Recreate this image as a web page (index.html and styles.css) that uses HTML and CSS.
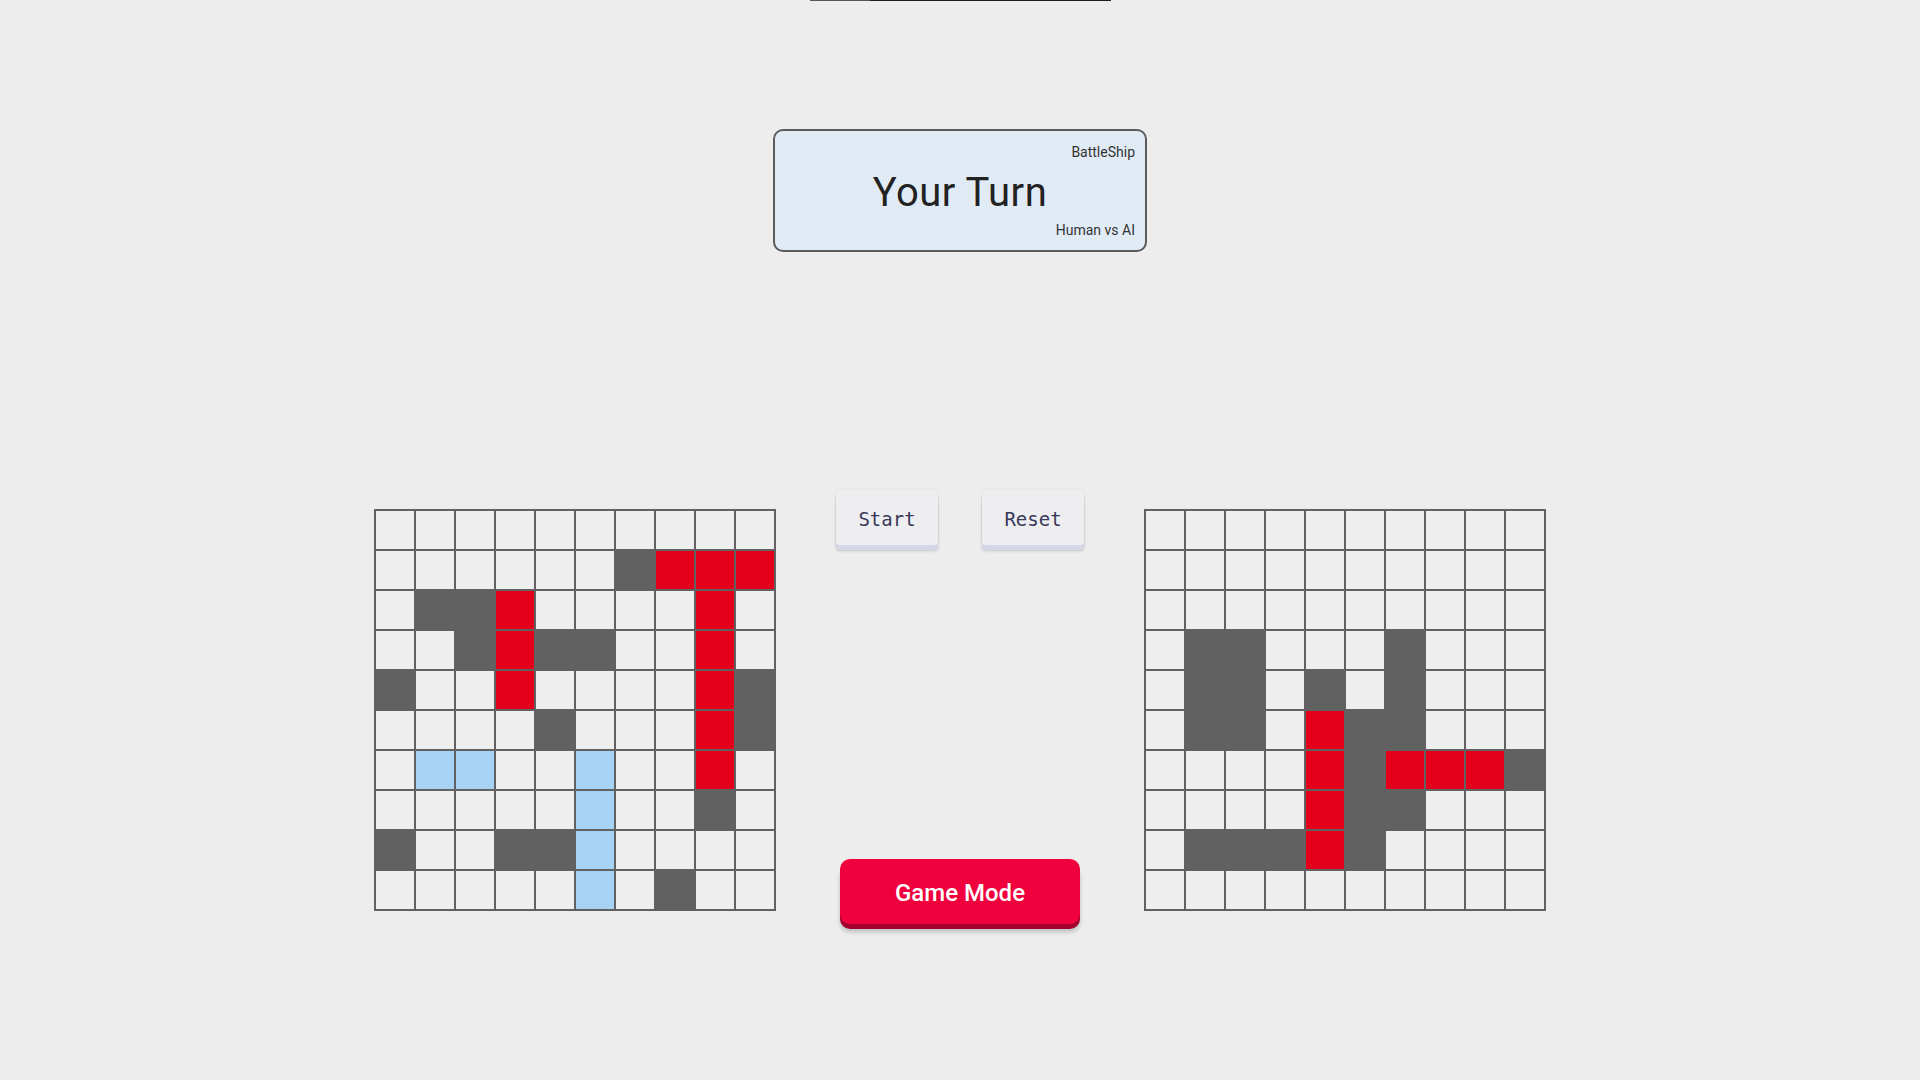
FILE: index.html
```html
<!DOCTYPE html>
<html>
<head>
<meta charset="utf-8">
<title>BattleShip</title>
<link rel="stylesheet" href="styles.css">
</head>
<body>
<div class="topline"></div>
<div class="status">
  <div class="status-small">BattleShip</div>
  <div class="status-title">Your Turn</div>
  <div class="status-small">Human vs AI</div>
</div>
<div class="board-row">
  <div class="grid">
    <div class="cell"></div><div class="cell"></div><div class="cell"></div><div class="cell"></div><div class="cell"></div><div class="cell"></div><div class="cell"></div><div class="cell"></div><div class="cell"></div><div class="cell"></div>
    <div class="cell"></div><div class="cell"></div><div class="cell"></div><div class="cell"></div><div class="cell"></div><div class="cell"></div><div class="cell ship"></div><div class="cell hit"></div><div class="cell hit"></div><div class="cell hit"></div>
    <div class="cell"></div><div class="cell ship"></div><div class="cell ship"></div><div class="cell hit"></div><div class="cell"></div><div class="cell"></div><div class="cell"></div><div class="cell"></div><div class="cell hit"></div><div class="cell"></div>
    <div class="cell"></div><div class="cell"></div><div class="cell ship"></div><div class="cell hit"></div><div class="cell ship"></div><div class="cell ship"></div><div class="cell"></div><div class="cell"></div><div class="cell hit"></div><div class="cell"></div>
    <div class="cell ship"></div><div class="cell"></div><div class="cell"></div><div class="cell hit"></div><div class="cell"></div><div class="cell"></div><div class="cell"></div><div class="cell"></div><div class="cell hit"></div><div class="cell ship"></div>
    <div class="cell"></div><div class="cell"></div><div class="cell"></div><div class="cell"></div><div class="cell ship"></div><div class="cell"></div><div class="cell"></div><div class="cell"></div><div class="cell hit"></div><div class="cell ship"></div>
    <div class="cell"></div><div class="cell miss"></div><div class="cell miss"></div><div class="cell"></div><div class="cell"></div><div class="cell miss"></div><div class="cell"></div><div class="cell"></div><div class="cell hit"></div><div class="cell"></div>
    <div class="cell"></div><div class="cell"></div><div class="cell"></div><div class="cell"></div><div class="cell"></div><div class="cell miss"></div><div class="cell"></div><div class="cell"></div><div class="cell ship"></div><div class="cell"></div>
    <div class="cell ship"></div><div class="cell"></div><div class="cell"></div><div class="cell ship"></div><div class="cell ship"></div><div class="cell miss"></div><div class="cell"></div><div class="cell"></div><div class="cell"></div><div class="cell"></div>
    <div class="cell"></div><div class="cell"></div><div class="cell"></div><div class="cell"></div><div class="cell"></div><div class="cell miss"></div><div class="cell"></div><div class="cell ship"></div><div class="cell"></div><div class="cell"></div>
  </div>
  <div class="center-col">
    <div class="controls">
      <button class="ctrl-btn">Start</button>
      <button class="ctrl-btn">Reset</button>
    </div>
    <button class="mode-btn">Game Mode</button>
  </div>
  <div class="grid">
    <div class="cell"></div><div class="cell"></div><div class="cell"></div><div class="cell"></div><div class="cell"></div><div class="cell"></div><div class="cell"></div><div class="cell"></div><div class="cell"></div><div class="cell"></div>
    <div class="cell"></div><div class="cell"></div><div class="cell"></div><div class="cell"></div><div class="cell"></div><div class="cell"></div><div class="cell"></div><div class="cell"></div><div class="cell"></div><div class="cell"></div>
    <div class="cell"></div><div class="cell"></div><div class="cell"></div><div class="cell"></div><div class="cell"></div><div class="cell"></div><div class="cell"></div><div class="cell"></div><div class="cell"></div><div class="cell"></div>
    <div class="cell"></div><div class="cell ship"></div><div class="cell ship"></div><div class="cell"></div><div class="cell"></div><div class="cell"></div><div class="cell ship"></div><div class="cell"></div><div class="cell"></div><div class="cell"></div>
    <div class="cell"></div><div class="cell ship"></div><div class="cell ship"></div><div class="cell"></div><div class="cell ship"></div><div class="cell"></div><div class="cell ship"></div><div class="cell"></div><div class="cell"></div><div class="cell"></div>
    <div class="cell"></div><div class="cell ship"></div><div class="cell ship"></div><div class="cell"></div><div class="cell hit"></div><div class="cell ship"></div><div class="cell ship"></div><div class="cell"></div><div class="cell"></div><div class="cell"></div>
    <div class="cell"></div><div class="cell"></div><div class="cell"></div><div class="cell"></div><div class="cell hit"></div><div class="cell ship"></div><div class="cell hit"></div><div class="cell hit"></div><div class="cell hit"></div><div class="cell ship"></div>
    <div class="cell"></div><div class="cell"></div><div class="cell"></div><div class="cell"></div><div class="cell hit"></div><div class="cell ship"></div><div class="cell ship"></div><div class="cell"></div><div class="cell"></div><div class="cell"></div>
    <div class="cell"></div><div class="cell ship"></div><div class="cell ship"></div><div class="cell ship"></div><div class="cell hit"></div><div class="cell ship"></div><div class="cell"></div><div class="cell"></div><div class="cell"></div><div class="cell"></div>
    <div class="cell"></div><div class="cell"></div><div class="cell"></div><div class="cell"></div><div class="cell"></div><div class="cell"></div><div class="cell"></div><div class="cell"></div><div class="cell"></div><div class="cell"></div>
  </div>
</div>
</body>
</html>
```
FILE: styles.css
```css
html, body {
  margin: 0;
  padding: 0;
}
body {
  background: #ededed;
  min-height: 100vh;
  font-family: Roboto, "Noto Sans", sans-serif;
  color: #222;
}
.topline {
  width: 301px;
  height: 1px;
  margin: 0 auto;
  background: linear-gradient(to right, #555 0, #555 60px, #1e1e1e 60px, #1e1e1e 100%);
}
.status {
  box-sizing: border-box;
  width: 374px;
  height: 123px;
  margin: 128px auto 0;
  border: 2px solid #5b5b5b;
  border-radius: 10px;
  background: #e1ebf6;
  padding: 13px 10px 12px;
  display: flex;
  flex-direction: column;
}
.status-small {
  font-size: 14px;
  line-height: 16px;
  text-align: right;
  color: #333;
}
.status-title {
  flex: 1;
  display: flex;
  align-items: center;
  justify-content: center;
  font-size: 40px;
  color: #222;
  letter-spacing: 0.5px;
  padding-top: 2px;
}
.board-row {
  display: flex;
  justify-content: center;
  align-items: flex-start;
  margin-top: 238px;
}
.grid {
  display: grid;
  grid-template-columns: repeat(10, 40px);
  grid-auto-rows: 40px;
  border: 1px solid #616161;
  margin-top: 19px;
}
.cell {
  box-sizing: border-box;
  border: 1px solid #616161;
  background: #eeeeee;
}
.cell.ship {
  background: #616161;
}
.cell.hit {
  background: #e4001b;
}
.cell.miss {
  background: #a6d2f3;
}
.center-col {
  width: 368px;
  display: flex;
  flex-direction: column;
  align-items: center;
}
.controls {
  display: flex;
  gap: 44px;
}
.ctrl-btn {
  width: 102px;
  height: 55px;
  border: none;
  border-radius: 4px;
  background: #eeeef1;
  font-family: "DejaVu Sans Mono", "Liberation Mono", monospace;
  font-size: 19px;
  color: #38385a;
  box-shadow: 0 5px 0 #d5d5e8, 0 6px 3px rgba(0, 0, 0, 0.18), 0 0 2px rgba(0, 0, 0, 0.12);
  padding: 2px 0 0;
  cursor: pointer;
}
.mode-btn {
  margin-top: 314px;
  width: 240px;
  height: 65px;
  border: none;
  border-radius: 10px;
  background: #f0003c;
  color: #fff;
  font-family: Roboto, "Noto Sans", sans-serif;
  font-weight: 500;
  font-size: 24px;
  box-shadow: 0 5px 0 #a3002f, 0 8px 4px rgba(0, 0, 0, 0.2);
  padding: 3px 0 0;
  cursor: pointer;
}
```
